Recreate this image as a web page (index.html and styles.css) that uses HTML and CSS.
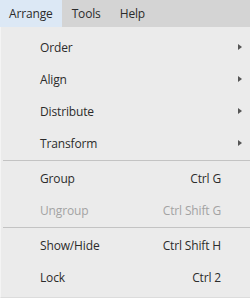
FILE: index.html
```html
<!DOCTYPE html>
<html>

<head>
    <meta charset="UTF-8" />
    <title>Arrange menu</title>
    <link rel="stylesheet" href="styles.css">
</head>

<body>
    <div class="menubar">
        <span class="menubar-item active">Arrange</span>
        <span class="menubar-item">Tools</span>
        <span class="menubar-item">Help</span>
    </div>
    <div class="menu">
        <div class="menu-item">Order<span class="arrow"></span></div>
        <div class="menu-item">Align<span class="arrow"></span></div>
        <div class="menu-item">Distribute<span class="arrow"></span></div>
        <div class="menu-item">Transform<span class="arrow"></span></div>
        <div class="separator"></div>
        <div class="menu-item">Group<span class="shortcut">Ctrl G</span></div>
        <div class="menu-item disabled">Ungroup<span class="shortcut">Ctrl Shift G</span></div>
        <div class="separator"></div>
        <div class="menu-item">Show/Hide<span class="shortcut">Ctrl Shift H</span></div>
        <div class="menu-item">Lock<span class="shortcut">Ctrl 2</span></div>
    </div>
</body>

</html>
```

FILE: styles.css
```css
body {
    font-family: "Open Sans", "Noto Sans", sans-serif;
    font-size: 12px;
    letter-spacing: -0.15px;
    margin: 0;
    padding: 0;
    width: 250px;
    height: 298px;
    overflow: hidden;
    background-color: #ebebeb;
    color: #2b2b2b;
}

.menubar {
    display: flex;
    height: 27px;
    background-color: #d4d4d4;
}

.menubar-item {
    display: flex;
    align-items: center;
    padding: 0 9px 1px 9px;
    margin-right: 1px;
}

.menubar-item.active {
    background-color: #dce8f5;
}

.menu {
    padding-top: 4px;
    padding-left: 1px;
    height: 266px;
    background-color: #ebebeb;
    border-left: 1px solid #f4f4f4;
    border-bottom: 1px solid #dcdcdc;
}

.menu-item {
    display: flex;
    align-items: center;
    height: 32px;
    padding-left: 38px;
    padding-right: 29px;
    position: relative;
}

.menu-item.disabled {
    color: #a3a3a3;
}

.shortcut {
    margin-left: auto;
}

.arrow {
    position: absolute;
    right: 8px;
    top: 13px;
    width: 0;
    height: 0;
    border-top: 3.5px solid transparent;
    border-bottom: 3.5px solid transparent;
    border-left: 4px solid #555;
}

.separator {
    height: 1px;
    margin: 1px 0 1px 1px;
    background-color: #c3c3c3;
}
```
